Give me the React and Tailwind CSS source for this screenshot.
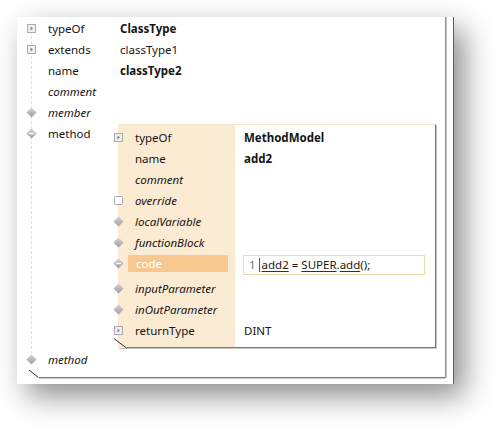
import React from "react";

const ExpandIcon = () => (
  <svg width="11" height="11" viewBox="0 0 11 11">
    <rect x="1.5" y="1.5" width="8" height="8" fill="#efefef" stroke="#acacac" />
    <path d="M4.5 3.5 L7 5.5 L4.5 7.5 Z" fill="#858585" />
  </svg>
);

const Diamond = ({ minus }) => (
  <svg width="13" height="13" viewBox="0 0 13 13">
    <defs>
      <linearGradient id="dg" x1="0" y1="0" x2="0" y2="1">
        <stop offset="0" stopColor="#d6d6d6" />
        <stop offset="1" stopColor="#9e9e9e" />
      </linearGradient>
    </defs>
    <path d="M6.5 0.5 L12.5 6.5 L6.5 12.5 L0.5 6.5 Z" fill="url(#dg)" />
    {minus && <rect x="3.5" y="5.7" width="6" height="1.6" fill="#ffffff" />}
  </svg>
);

const Checkbox = () => (
  <svg width="11" height="11" viewBox="0 0 11 11">
    <rect x="1.5" y="1.5" width="8" height="8" rx="1" fill="#ffffff" stroke="#a8a8a8" />
  </svg>
);

const Icon = ({ type }) => {
  if (type === "expand") return <ExpandIcon />;
  if (type === "diamond") return <Diamond />;
  if (type === "minus") return <Diamond minus />;
  if (type === "check") return <Checkbox />;
  return null;
};

const outerRows = [
  { icon: "expand", label: "typeOf", value: "ClassType", bold: true },
  { icon: "expand", label: "extends", value: "classType1" },
  { label: "name", value: "classType2", bold: true },
  { label: "comment", italic: true },
  { icon: "diamond", label: "member", italic: true },
];

const innerRows = [
  { icon: "expand", label: "typeOf", value: "MethodModel", bold: true },
  { label: "name", value: "add2", bold: true },
  { label: "comment", italic: true },
  { icon: "check", label: "override", italic: true },
  { icon: "diamond", label: "localVariable", italic: true },
  { icon: "diamond", label: "functionBlock", italic: true },
];

const innerRowsAfter = [
  { icon: "diamond", label: "inputParameter", italic: true },
  { icon: "diamond", label: "inOutParameter", italic: true },
  { icon: "expand", label: "returnType", value: "DINT" },
];

const OuterRow = ({ icon, label, value, bold, italic }) => (
  <div className="flex items-center h-[21px]">
    <div className="w-[11px] h-[11px] flex items-center justify-center">
      {icon && <Icon type={icon} />}
    </div>
    <div className={`ml-[11px] w-[72px] ${italic ? "italic" : ""}`}>{label}</div>
    <div className={bold ? "font-bold" : ""}>{value}</div>
  </div>
);

const InnerRow = ({ icon, label, value, bold, italic }) => (
  <div className="flex items-center h-[21px]">
    <div className="w-[117px] flex items-center">
      <div className="-ml-[5px] w-[11px] h-[11px] flex items-center justify-center">
        {icon && <Icon type={icon} />}
      </div>
      <div className={`ml-[11px] ${italic ? "italic" : ""}`}>{label}</div>
    </div>
    <div className={`ml-[9px] ${bold ? "font-bold" : ""}`}>{value}</div>
  </div>
);

const CodeRow = () => (
  <div className="flex items-start h-[25px] pt-[2px]">
    <div className="w-[117px] flex items-center h-[17px]">
      <div className="-ml-[5px] w-[11px] h-[11px] flex items-center justify-center">
        <Icon type="minus" />
      </div>
      <div className="ml-[4px] w-[100px] h-[17px] bg-[#f8c98f] text-white pl-[8px] leading-[17px]">
        code
      </div>
    </div>
    <div className="ml-[8px] w-[182px] h-[20px] border border-[#f0d8ae] bg-white flex items-center">
      <span className="pl-[5px] pr-[3px] text-[#6e6e6e]">1</span>
      <span className="w-px h-[14px] bg-[#555]" />
      <span className="pl-[2px] text-[#1a1a1a]">
        <span className="underline decoration-[#1d2a8a] underline-offset-2">add2</span>
        {" = "}
        <span className="underline decoration-[#1d2a8a] underline-offset-2">SUPER</span>.
        <span className="underline decoration-[#1d2a8a] underline-offset-2">add</span>();
      </span>
    </div>
  </div>
);

const InnerBox = () => (
  <div className="relative mt-[1px] w-[318px] border-t border-[#f6e6cc] border-r border-r-[#7a7a7a] shadow-[1px_1px_0_#c4c4c4] bg-[linear-gradient(to_right,#fcebd3_117px,#ffffff_117px)]">
    <div className="pt-[2px] pb-[6px]">
      {innerRows.map((r) => (
        <InnerRow key={r.label} {...r} />
      ))}
      <CodeRow />
      {innerRowsAfter.map((r) => (
        <InnerRow key={r.label} {...r} />
      ))}
    </div>
    <div className="flex h-[1px]">
      <div className="w-[9px] bg-white" />
      <div className="flex-1 bg-[#7a7a7a]" />
    </div>
    <svg className="absolute -left-[4px] -bottom-[1px]" width="14" height="11" viewBox="0 0 14 11">
      <path d="M0 0.5 L13 10.5" stroke="#2e2e2e" strokeWidth="1" />
    </svg>
  </div>
);

export default function App() {
  return (
    <div className="w-[502px] h-[433px] bg-white pt-[17px] pl-[17px] font-['Noto_Sans',sans-serif] text-[11.5px] text-[#151515]">
      <div className="w-[437px] h-[367px] bg-white border-r border-[#5e5e5e] shadow-[10px_12px_28px_rgba(0,0,0,0.45)]">
        <div className="relative ml-[9px] w-[420px] pt-px flex flex-col border-r border-[#8a8a8a] shadow-[1px_0_0_#c8c8c8]">
          <div className="absolute left-[5px] top-[14px] bottom-[14px] border-l border-dashed border-[#f0dfc4]" />
          <div className="relative">
            {outerRows.map((r) => (
              <OuterRow key={r.label} {...r} />
            ))}
            <div className="flex">
              <div className="w-[92px] flex items-start h-[21px]">
                <div className="flex items-center h-[21px]">
                  <div className="w-[11px] h-[11px] flex items-center justify-center">
                    <Icon type="minus" />
                  </div>
                  <div className="ml-[11px]">method</div>
                </div>
              </div>
              <InnerBox />
            </div>
            <div className="mt-[1px]">
              <OuterRow icon="diamond" label="method" italic />
            </div>
          </div>
          <div className="flex h-[8px]">
            <svg width="13" height="8" viewBox="0 0 13 8">
              <path d="M3 0 L12.5 7.5" stroke="#2e2e2e" strokeWidth="1" />
            </svg>
            <div className="flex-1 border-b border-[#7d7d7d] shadow-[0_1px_0_#c8c8c8]" />
          </div>
        </div>
      </div>
    </div>
  );
}
